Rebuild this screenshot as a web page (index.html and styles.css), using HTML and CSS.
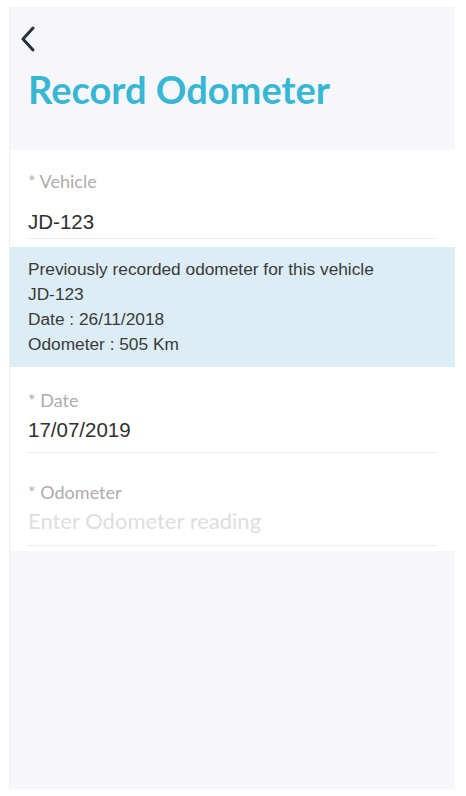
FILE: index.html
```html
<!doctype html>
<html lang="en">
<head>
  <title>Record Odometer</title>
  <meta charset="utf-8">
  <meta name="viewport" content="width=device-width, user-scalable=no">
  <link rel="stylesheet" href="styles.css">
</head>
<body>

<div class="screen">
  <header class="page-header">
    <a class="back" href="#" aria-label="Back">
      <svg width="16" height="26" viewBox="0 0 16 26">
        <path d="M13 2 L3 13 L13 24" fill="none" stroke="#243142" stroke-width="3" stroke-linecap="round" stroke-linejoin="round"/>
      </svg>
    </a>
    <h1 class="title">Record Odometer</h1>
  </header>

  <form class="record-form">
    <label class="field field-vehicle">
      <span class="field-label">* Vehicle</span>
      <span class="field-value">JD-123</span>
    </label>

    <div class="previous">
      <div>Previously recorded odometer for this vehicle</div>
      <div>JD-123</div>
      <div>Date : 26/11/2018</div>
      <div>Odometer : 505 Km</div>
    </div>

    <label class="field field-date">
      <span class="field-label">* Date</span>
      <span class="field-value">17/07/2019</span>
    </label>

    <label class="field field-odometer">
      <span class="field-label">* Odometer</span>
      <input class="field-input" type="text" placeholder="Enter Odometer reading">
    </label>
  </form>
</div>

</body>
</html>
```

FILE: styles.css
```css
:root {
  --screen-color: #f7f7fb;
  --title-color: #38b7d5;
  --label-color: #acacac;
  --value-color: #303030;
  --divider-color: #ececec;
  --info-color: #dcedf5;

  --side-padding: 18px;
}
html {
  box-sizing: border-box;
}
*, *:before, *:after {
  box-sizing: inherit;
}
body {
  margin: 0;
  background-color: #fff;
  font-family: Lato, "Liberation Sans", sans-serif;
}
.screen {
  margin: 7px 0 0 10px;
  width: 445px;
  height: 782px;
  background-color: var(--screen-color);
  box-shadow: -1px 0 0 #f0f0f4;
}
.page-header {
  height: 143px;
  padding: 19px var(--side-padding) 0;
}
.back {
  display: block;
  width: 16px;
  height: 26px;
  margin-left: -8px;
}
.back svg {
  display: block;
}
.title {
  margin: 14px 0 0;
  font-size: 38px;
  font-weight: 700;
  line-height: 46px;
  color: var(--title-color);
}
.record-form {
  background-color: #fff;
  padding-bottom: 5px;
}
.field {
  display: flex;
  flex-direction: column;
  margin: 0 var(--side-padding);
  border-bottom: 1px solid var(--divider-color);
}
.field-label {
  font-size: 18px;
  line-height: 24px;
  color: var(--label-color);
}
.field-value,
.field-input {
  font-family: "Liberation Sans", Arial, sans-serif;
  font-size: 20.5px;
  line-height: 28px;
  color: var(--value-color);
}
.field-input {
  border: none;
  outline: none;
  padding: 0;
  background: transparent;
}
.field-input::placeholder {
  font-family: Lato, sans-serif;
  font-size: 22px;
  color: #dedede;
}
.field-vehicle {
  padding-top: 19px;
  height: 89px;
  gap: 15px;
}
.previous {
  margin-top: 8px;
  padding: 10px var(--side-padding);
  background-color: var(--info-color);
  font-family: "Liberation Sans", Arial, sans-serif;
  font-size: 17.3px;
  line-height: 25px;
  color: #3a3a3a;
}
.field-date {
  padding-top: 21px;
  height: 86px;
  gap: 4px;
}
.field-odometer {
  padding-top: 27px;
  height: 93px;
  gap: 4px;
}
```
